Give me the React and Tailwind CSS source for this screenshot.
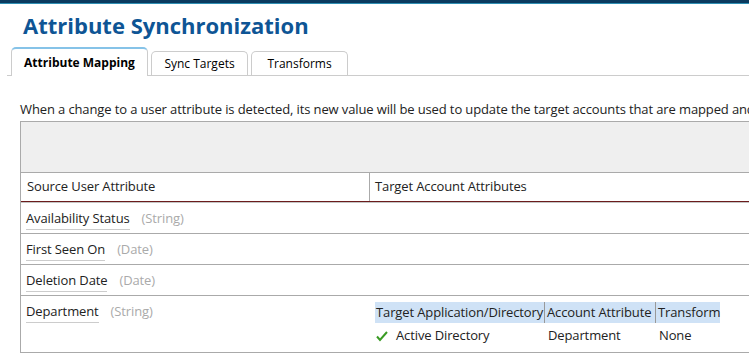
export default function App() {
  const rows = [
    { name: "Availability Status", type: "(String)" },
    { name: "First Seen On", type: "(Date)" },
    { name: "Deletion Date", type: "(Date)" },
  ];
  return (
    <div className="w-[749px] h-[356px] overflow-hidden bg-white text-[13px] text-[#222]" style={{ fontFamily: '"Open Sans", sans-serif' }}>
      <div className="h-[3px] bg-[#0b3b5f]" />
      <div className="h-px bg-[#2f8fb3]" />
      <h1 className="pl-[23px] pt-[7px] text-[22px] leading-[28px] font-bold text-[#0e5595]">Attribute Synchronization</h1>
      <div className="ml-[7px] mt-[8px] flex items-end border-b border-[#cccccc] h-[29px]">
        <div className="ml-[4px] h-[29px] -mb-px w-[137px] bg-white border-x border-[#cccccc] rounded-t-[5px] border-t-2 border-t-[#86c3e8] flex items-center justify-center text-[12px] font-bold text-black">Attribute Mapping</div>
        <div className="ml-[3px] h-[24px] w-[97px] border border-b-0 border-[#cccccc] rounded-t-[5px] flex items-center justify-center text-[12px] text-black">Sync Targets</div>
        <div className="ml-[3px] h-[24px] w-[97px] border border-b-0 border-[#cccccc] rounded-t-[5px] flex items-center justify-center text-[12px] text-black">Transforms</div>
      </div>
      <div className="tracking-[-0.12px]">
        <p className="pl-[20px] pt-[24px] leading-[18px] whitespace-nowrap">When a change to a user attribute is detected, its new value will be used to update the target accounts that are mapped and configured for synchronization.</p>
        <div className="ml-[20px] mt-[3px] border-l border-[#aaaaaa]">
          <div className="h-[52px] bg-[#efefef] border-y border-[#aaaaaa]" />
          <div className="flex h-[29px] border-b border-b-[#6b1c1c]">
            <div className="w-[349px] border-r border-[#aaaaaa] pl-[6px] flex items-center">Source User Attribute</div>
            <div className="pl-[5px] flex items-center">Target Account Attributes</div>
          </div>
          <div className="h-px bg-[#c4c4c4]" />
          {rows.map((r) => (
            <div key={r.name} className="h-[31px] border-b border-[#aaaaaa] flex items-start pt-[6px] pl-[5px]">
              <span className="border-b border-[#cccccc] pb-[2px] leading-[18px]">{r.name}</span>
              <span className="ml-[12px] text-[#aaaaaa] leading-[18px]">{r.type}</span>
            </div>
          ))}
          <div className="h-[57px] border-b border-[#aaaaaa] flex">
            <div className="w-[349px] pt-[6px] pl-[5px] flex items-start">
              <span className="border-b border-[#cccccc] pb-[2px] leading-[18px]">Department</span>
              <span className="ml-[12px] text-[#aaaaaa] leading-[18px]">(String)</span>
            </div>
            <div className="pt-[6px] pl-[5px] whitespace-nowrap">
              <div className="flex bg-[#cfe2f6] h-[21px] items-center">
                <div className="w-[170px] pl-[1px] border-r border-[#999999] h-full flex items-center">Target Application/Directory</div>
                <div className="w-[111px] pl-[2px] border-r border-[#999999] h-full flex items-center">Account Attribute</div>
                <div className="w-[64px] pl-[2px] h-full flex items-center">Transform</div>
              </div>
              <div className="flex h-[22px] mt-[2px] items-center">
                <div className="w-[170px] pl-[1px] flex items-center">
                  <svg width="12" height="12" viewBox="0 0 12 12" className="mr-[8px]">
                    <path d="M1 6.5 L4 10 L11 2" fill="none" stroke="#3a9b24" strokeWidth="2" />
                  </svg>
                  Active Directory
                </div>
                <div className="w-[111px] pl-[3px]">Department</div>
                <div className="w-[64px] pl-[3px]">None</div>
              </div>
            </div>
          </div>
        </div>
      </div>
    </div>
  );
}
